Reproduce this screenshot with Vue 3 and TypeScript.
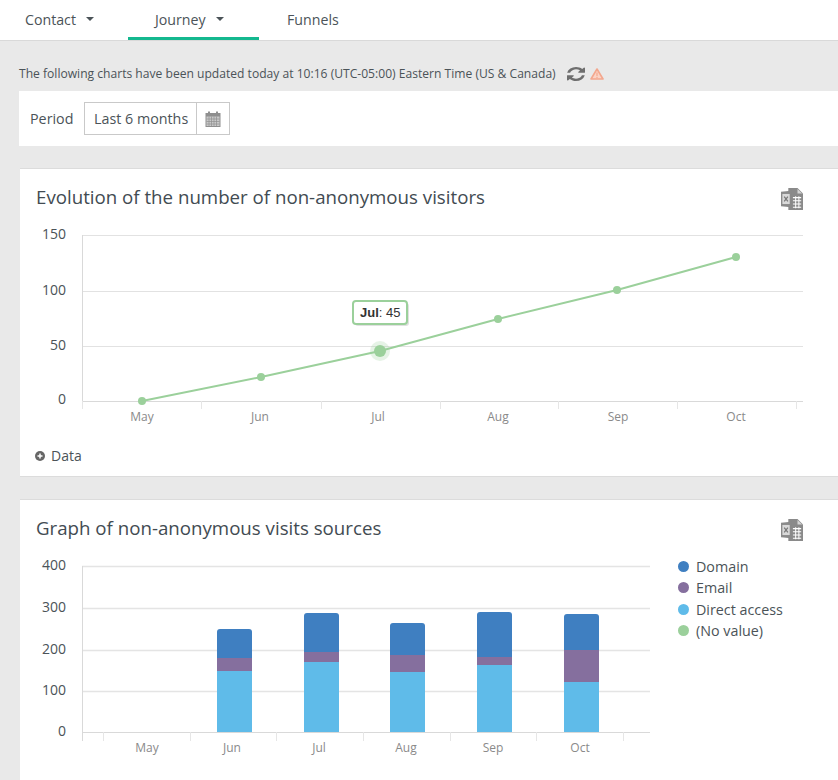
<script setup lang="ts">
interface Point { m: string; lx: number; x: number; y: number }
const yTicks1 = [
  { v: '150', y: 235, ly: 239 },
  { v: '100', y: 291, ly: 295 },
  { v: '50', y: 346, ly: 350 },
  { v: '0', y: 401, ly: 404 },
]
const pts: Point[] = [
  { m: 'May', lx: 142, x: 142, y: 401 },
  { m: 'Jun', lx: 260, x: 261, y: 377 },
  { m: 'Jul', lx: 378, x: 380, y: 351 },
  { m: 'Aug', lx: 498, x: 498, y: 319 },
  { m: 'Sep', lx: 618, x: 617, y: 290 },
  { m: 'Oct', lx: 736, x: 736, y: 257 },
]
const line = pts.map(p => `${p.x},${p.y}`).join(' ')
const ticks1 = [82, 201, 321, 440, 558, 677, 796]

const yTicks2 = [
  { v: '400', y: 566 },
  { v: '300', y: 608 },
  { v: '200', y: 650 },
  { v: '100', y: 691 },
  { v: '0', y: 732 },
]
const ticks2 = [103, 190, 276, 363, 450, 536, 623]
const months2 = [
  { m: 'May', x: 147 }, { m: 'Jun', x: 232 }, { m: 'Jul', x: 319 },
  { m: 'Aug', x: 406 }, { m: 'Sep', x: 493 }, { m: 'Oct', x: 580 },
]
const bars = [
  { x: 217, top: 629, mid: 658, low: 671 },
  { x: 304, top: 613, mid: 652, low: 662 },
  { x: 390, top: 623, mid: 655, low: 672 },
  { x: 477, top: 612, mid: 657, low: 665 },
  { x: 564, top: 614, mid: 650, low: 682 },
]
const barBottom = 732
const legend = [
  { label: 'Domain', color: '#3f7fc1' },
  { label: 'Email', color: '#856f9e' },
  { label: 'Direct access', color: '#5fbbe9' },
  { label: '(No value)', color: '#9bd09b' },
]
function topPath(x: number, top: number, mid: number): string {
  return `M${x} ${mid}V${top + 3}Q${x} ${top} ${x + 3} ${top}H${x + 32}Q${x + 35} ${top} ${x + 35} ${top + 3}V${mid}Z`
}
</script>

<template>
  <div class="page">
    <nav class="tabs">
      <a class="tab tab-contact">Contact<span class="caret"></span></a>
      <a class="tab tab-journey">Journey<span class="caret"></span></a>
      <a class="tab tab-funnels">Funnels</a>
    </nav>

    <p class="notice">
      <span>The following charts have been updated today at 10:16 (UTC-05:00) Eastern Time (US &amp; Canada)</span>
      <svg class="ico-refresh" width="18" height="14" viewBox="128 128 1536 1536" preserveAspectRatio="none">
        <path d="M1639 1056q0 5-1 7-64 268-268 434.500t-478 166.500q-146 0-282.500-55t-243.500-157l-129 129q-19 19-45 19t-45-19-19-45v-448q0-26 19-45t45-19h448q26 0 45 19t19 45-19 45l-137 137q71 66 161 102t187 36q134 0 250-65t186-179q11-17 53-117 8-23 30-23h192q13 0 22.500 9.500t9.500 22.500zm25-800v448q0 26-19 45t-45 19h-448q-26 0-45-19t-19-45 19-45l138-138q-148-137-349-137-134 0-250 65t-186 179q-11 17-53 117-8 23-30 23h-199q-13 0-22.500-9.500t-9.500-22.500v-7q65-268 270-434.500t480-166.500q146 0 284 55.500t245 156.500l130-129q19-19 45-19t45 19 19 45z" fill="#6e6e6e"/>
      </svg>
      <svg class="ico-warn" width="14" height="12" viewBox="0 0 14 12">
        <path d="M7 1 L13 11 H1 Z" fill="#fbd3c5" stroke="#f3a78d" stroke-width="1.600" stroke-linejoin="round"/>
        <rect x="6.400" y="4.500" width="1.200" height="3.500" fill="#f3a78d"/>
        <rect x="6.400" y="8.800" width="1.200" height="1.200" fill="#f3a78d"/>
      </svg>
    </p>

    <section class="period">
      <span class="period-label">Period</span>
      <div class="period-box">
        <span class="period-value">Last 6 months</span>
        <span class="period-btn">
          <svg width="16" height="16" viewBox="0 0 16 16">
            <rect x="0.500" y="2" width="15" height="14" fill="#8f8f8f"/>
            <rect x="3" y="0.500" width="2" height="3" fill="#8f8f8f"/>
            <rect x="11" y="0.500" width="2" height="3" fill="#8f8f8f"/>
            <rect x="1.500" y="5.500" width="13" height="9.500" fill="#c9c9c9"/>
            <path d="M1.500 8h13M1.500 10.500h13M1.500 13h13M4 5.500v9.500M6.500 5.500v9.500M9 5.500v9.500M11.500 5.500v9.500" stroke="#8f8f8f" stroke-width="0.700"/>
          </svg>
        </span>
      </div>
    </section>

    <section class="card card-one">
      <header class="card-head">
        <h2>Evolution of the number of non-anonymous visitors</h2>
        <svg class="ico-xls" width="22" height="22" viewBox="0 0 24 24">
          <path d="M8 0h10l6 6v18H8z" fill="#8a8a8a"/>
          <path d="M18 1v5h5z" fill="#d4d4d4"/>
          <path d="M13 10.500h9M13 14h9M13 17.500h9M13 21h9M16 9v13M19.500 9v13" stroke="#fff" stroke-width="1.100"/>
          <path d="M0 4l11-1v18L0 20z" fill="#8a8a8a"/>
          <rect x="1.500" y="6.500" width="8" height="11" fill="#d9d9d9"/>
          <path d="M3.500 9.500l4 5M7.500 9.500l-4 5" stroke="#777" stroke-width="1.400"/>
        </svg>
      </header>
      <svg class="chart-one" width="818" height="200" viewBox="20 225 818 200">
        <line v-for="t in yTicks1.slice(0, 3)" :key="t.v" x1="82" x2="803" :y1="t.y + 0.5" :y2="t.y + 0.5" class="grid"/>
        <line x1="82" x2="803" y1="401.5" y2="401.5" class="axis"/>
        <line x1="82.500" x2="82.500" y1="235" y2="409" class="axis"/>
        <line v-for="x in ticks1" :key="x" :x1="x + 0.5" :x2="x + 0.5" y1="401" y2="409" class="tick"/>
        <text v-for="t in yTicks1" :key="t.v" x="66" :y="t.ly" text-anchor="end" class="y-label">{{ t.v }}</text>
        <text v-for="p in pts" :key="p.m" :x="p.lx" y="421" text-anchor="middle" class="x-label">{{ p.m }}</text>
        <polyline :points="line" fill="none" stroke="#9bd09b" stroke-width="2"/>
        <circle v-for="p in pts" :key="p.m" :cx="p.x" :cy="p.y" r="4" fill="#9bd09b"/>
        <circle cx="380" cy="351" r="10" fill="#9bd09b" opacity="0.250"/>
        <circle cx="380" cy="351" r="6" fill="#9bd09b"/>
        <rect x="355" y="303" width="54" height="23" rx="3" fill="#000" opacity="0.120"/>
        <rect x="353" y="301" width="54" height="23" rx="3" fill="#fff" stroke="#9bd09b" stroke-width="2"/>
        <text x="360" y="317" class="tip"><tspan font-weight="700">Jul</tspan>: 45</text>
      </svg>
      <div class="data-row">
        <svg width="10" height="10" viewBox="0 0 10 10">
          <circle cx="5" cy="5" r="5" fill="#666"/>
          <path d="M2.500 5h5M5 2.500v5" stroke="#fff" stroke-width="1.500"/>
        </svg>
        <span>Data</span>
      </div>
    </section>

    <section class="card card-two">
      <header class="card-head">
        <h2>Graph of non-anonymous visits sources</h2>
        <svg class="ico-xls" width="22" height="22" viewBox="0 0 24 24">
          <path d="M8 0h10l6 6v18H8z" fill="#8a8a8a"/>
          <path d="M18 1v5h5z" fill="#d4d4d4"/>
          <path d="M13 10.500h9M13 14h9M13 17.500h9M13 21h9M16 9v13M19.500 9v13" stroke="#fff" stroke-width="1.100"/>
          <path d="M0 4l11-1v18L0 20z" fill="#8a8a8a"/>
          <rect x="1.500" y="6.500" width="8" height="11" fill="#d9d9d9"/>
          <path d="M3.500 9.500l4 5M7.500 9.500l-4 5" stroke="#777" stroke-width="1.400"/>
        </svg>
      </header>
      <div class="chart-two-row">
        <svg class="chart-two" width="640" height="220" viewBox="20 555 640 220">
          <line v-for="t in yTicks2.slice(0, 4)" :key="t.v" x1="82" x2="650" :y1="t.y + 0.5" :y2="t.y + 0.5" class="grid grid-strong"/>
          <line x1="82" x2="650" y1="732.5" y2="732.5" class="axis"/>
          <line x1="82.500" x2="82.500" y1="566" y2="741" class="axis"/>
          <line v-for="x in ticks2" :key="x" :x1="x + 0.5" :x2="x + 0.5" y1="732" y2="741" class="tick"/>
          <text v-for="t in yTicks2" :key="t.v" x="66" :y="t.y + 4" text-anchor="end" class="y-label">{{ t.v }}</text>
          <text v-for="m in months2" :key="m.m" :x="m.x" y="752" text-anchor="middle" class="x-label">{{ m.m }}</text>
          <g v-for="b in bars" :key="b.x">
            <path :d="topPath(b.x, b.top, b.mid)" fill="#3f7fc1"/>
            <rect :x="b.x" :y="b.mid" width="35" :height="b.low - b.mid" fill="#856f9e"/>
            <rect :x="b.x" :y="b.low" width="35" :height="barBottom - b.low" fill="#5fbbe9"/>
          </g>
        </svg>
        <ul class="legend">
          <li v-for="l in legend" :key="l.label">
            <i class="dot" :style="{ background: l.color }"></i>{{ l.label }}
          </li>
        </ul>
      </div>
    </section>
  </div>
</template>

<style>
html, body { margin: 0; background: #e9e9e9; }
</style>

<style scoped>
.page {
  width: 838px;
  height: 780px;
  overflow: hidden;
  background: #e9e9e9;
  font-family: "Open Sans", sans-serif;
  color: #444;
}
.tabs {
  height: 40px;
  background: #fff;
  border-bottom: 1px solid #d9d9d9;
  display: flex;
  box-sizing: content-box;
}
.tab {
  height: 40px;
  box-sizing: border-box;
  padding-bottom: 2px;
  font-size: 14.200px;
  color: #4b5358;
  display: flex;
  align-items: center;
}
.tab-contact { padding-left: 25px; width: 128px; }
.tab-journey { padding: 1px 0 0 27px; width: 131px; border-bottom: 3px solid #14b88f; }
.tab-funnels { padding-left: 28px; }
.caret {
  width: 0;
  height: 0;
  margin-left: 10px;
  border-left: 4px solid transparent;
  border-right: 4px solid transparent;
  border-top: 4px solid #4b5358;
}
.notice {
  margin: 0;
  height: 50px;
  padding: 16px 0 0 19px;
  box-sizing: border-box;
  font-size: 12.100px;
  line-height: 18px;
  color: #4b5358;
  display: flex;
  align-items: center;
  white-space: nowrap;
}
.ico-refresh { margin-left: 11px; }
.ico-warn { margin-left: 5px; }
.period {
  margin-left: 19px;
  height: 55px;
  background: #fff;
  display: flex;
  align-items: center;
  padding-left: 11px;
  font-size: 14.300px;
}
.period-label { color: #4b5358; width: 54px; }
.period-box {
  display: flex;
  height: 33px;
  width: 146px;
  box-sizing: border-box;
  border: 1px solid #c9c9c9;
  align-items: center;
}
.period-value { width: 112px; padding-left: 9px; box-sizing: border-box; line-height: 31px; color: #4b5358; white-space: nowrap; }
.period-btn {
  width: 32px;
  height: 31px;
  border-left: 1px solid #c9c9c9;
  display: flex;
  align-items: center;
  justify-content: center;
}
.card {
  margin-left: 20px;
  background: #fff;
  border-top: 1px solid #dcdcdc;
  border-bottom: 1px solid #dcdcdc;
  box-sizing: border-box;
}
.card-one { margin-top: 22px; height: 309px; }
.card-two { margin-top: 22px; height: 300px; }
.card-head {
  height: 56px;
  padding: 15px 35px 0 16px;
  box-sizing: border-box;
  display: flex;
  justify-content: space-between;
  align-items: flex-start;
}
.card-head h2 {
  margin: 0;
  font-size: 18.700px;
  font-weight: 400;
  line-height: 26px;
  color: #424b52;
}
.ico-xls { margin-top: 4px; }
.chart-one, .chart-two { display: block; flex: none; }
.grid { stroke: #e2e2e2; stroke-width: 1; }
.grid-strong { stroke: #e4e4e4; stroke-width: 1.500; }
.axis { stroke: #d9d9d9; stroke-width: 1; }
.tick { stroke: #e6e6e6; stroke-width: 1; }
.y-label { font-family: "Open Sans", sans-serif; font-size: 14px; fill: #4b5358; }
.x-label { font-family: "Open Sans", sans-serif; font-size: 12px; fill: #8a8a8a; }
.tip { font-family: "Liberation Sans", sans-serif; font-size: 13px; fill: #333; }
.data-row {
  display: flex;
  align-items: center;
  gap: 6px;
  padding-left: 15px;
  margin-top: 21px;
  font-size: 14px;
  line-height: 20px;
  color: #4b5358;
}
.chart-two-row { display: flex; margin-top: -1px; }
.legend {
  list-style: none;
  margin: 0;
  padding: 1px 0 0 18px;
  font-size: 14.300px;
  line-height: 21.300px;
  color: #4b5358;
}
.legend li { display: flex; align-items: center; white-space: nowrap; }
.dot {
  width: 11px;
  height: 11px;
  border-radius: 50%;
  margin-right: 7px;
  flex: none;
}
</style>
